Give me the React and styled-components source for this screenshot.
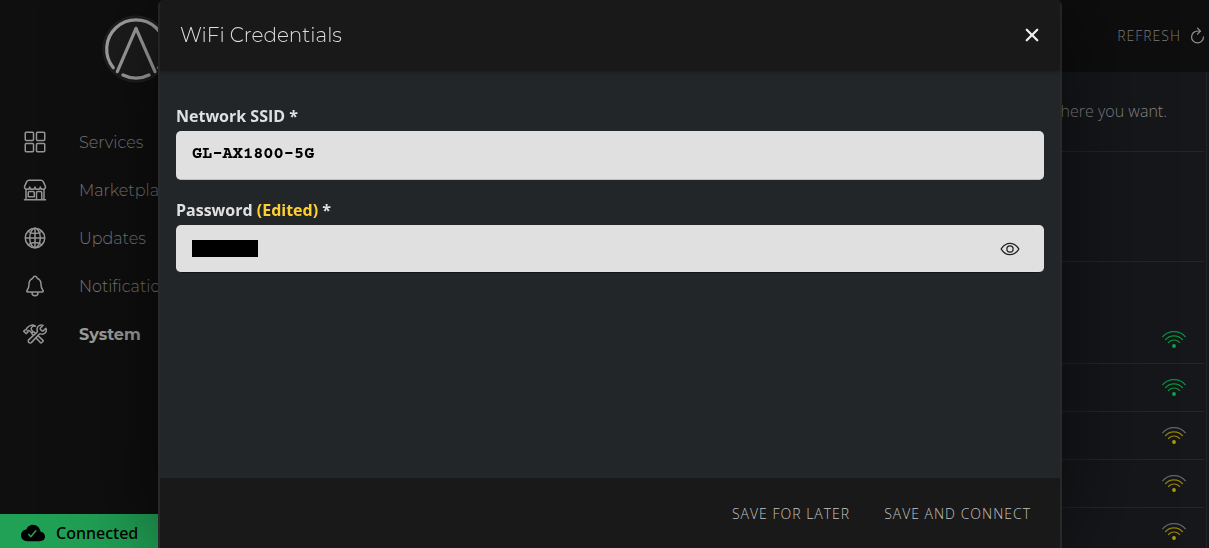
import React, { useState } from "react";
import styled, { createGlobalStyle } from "styled-components";
import {
  IoGridOutline,
  IoStorefrontOutline,
  IoGlobeOutline,
  IoNotificationsOutline,
  IoConstructOutline,
  IoCloudDone,
  IoRefreshOutline,
  IoClose,
  IoEyeOutline,
} from "react-icons/io5";

const GlobalStyle = createGlobalStyle`
  *, *::before, *::after { box-sizing: border-box; }
  body {
    margin: 0;
    overflow: hidden;
    background: #0f0f0f;
    font-family: "Open Sans", "Noto Sans", sans-serif;
  }
  button, input { font: inherit; border: 0; background: none; padding: 0; margin: 0; }
  button { cursor: pointer; }
`;

const heading = `Montserrat, "Open Sans", sans-serif`;

const Shell = styled.div`
  display: flex;
  height: 100vh;
  overflow: hidden;
`;

const Sidebar = styled.aside`
  display: flex;
  flex-direction: column;
  flex: 0 0 272px;
  background: #0f0f0f;
`;

const LogoArea = styled.div`
  display: flex;
  justify-content: center;
  padding: 15px 0 35px;
`;

const Nav = styled.nav`
  display: flex;
  flex-direction: column;
  flex: 1;
`;

const NavLink = styled.a`
  display: flex;
  align-items: center;
  gap: 32px;
  height: 48px;
  padding-left: 23px;
  color: ${(p) => (p.$active ? "#a0a0a0" : "#7c7c7c")};
  font-family: ${heading};
  font-size: 16px;
  font-weight: ${(p) => (p.$active ? 700 : 300)};
  text-decoration: none;

  svg { width: 24px; height: 24px; color: #959595; }
`;

const Status = styled.div`
  display: flex;
  align-items: center;
  gap: 11px;
  height: 34px;
  padding: 4px 0 0 21px;
  background: #20a155;
  color: #000;
  font-family: "Noto Sans", sans-serif;
  font-size: 16px;
  font-weight: 500;

  svg { width: 24px; height: 24px; }
`;

const Main = styled.main`
  flex: 1;
  min-width: 0;
  background: #15171a;
`;

const Toolbar = styled.header`
  display: flex;
  align-items: center;
  justify-content: flex-end;
  height: 72px;
  padding: 0 2px 2px 0;
  background: #0e0e0e;
`;

const RefreshButton = styled.button`
  display: flex;
  align-items: center;
  gap: 7px;
  color: #7c7c7c;
  font-size: 14px;
  font-weight: 300;
  letter-spacing: 1px;

  svg { width: 19px; height: 19px; color: #949494; }
`;

const Content = styled.div`
  margin-right: 2px;
  padding-right: 2px;
  border-right: 1px solid #222427;
`;

const Section = styled.section`
  display: flex;
  align-items: center;
  justify-content: flex-end;
  height: ${(p) => p.$height}px;
  padding: 0 37px 2px 0;
  border-bottom: 1px solid ${(p) => (p.$plain ? "transparent" : "#232528")};
  color: #858585;
  font-size: 16px;
  font-weight: 300;
`;

const NetworkRow = styled.div`
  display: flex;
  align-items: center;
  justify-content: flex-end;
  height: 48px;
  padding: 0 17px 2px 0;
  border-bottom: 1px solid #232528;
`;

const Overlay = styled.div`
  position: fixed;
  inset: 0;
  display: flex;
  padding: 0 147px 0 158px;
`;

const Dialog = styled.form`
  display: flex;
  flex-direction: column;
  flex: 1;
  min-width: 0;
  border: solid #29292c;
  border-width: 0 2px;
  border-radius: 6px 6px 0 0;
  background: #222629;
  box-shadow: 0 0 100px rgba(0, 0, 0, 0.6);
`;

const DialogHeader = styled.header`
  display: flex;
  align-items: center;
  justify-content: space-between;
  height: 71px;
  padding: 0 16px 2px 20px;
  border-radius: 4px 4px 0 0;
  background: #191919;
  box-shadow: 0 1px 4px rgba(0, 0, 0, 0.3);
`;

const Title = styled.h1`
  margin: 0;
  color: #dedede;
  font-family: ${heading};
  font-size: 20px;
  font-weight: 300;
`;

const CloseButton = styled.button`
  display: flex;
  color: #eee;

  svg { width: 24px; height: 24px; }
`;

const Fields = styled.div`
  display: flex;
  flex-direction: column;
  flex: 1;
  gap: 20px;
  padding: 35px 16px 0;
`;

const Field = styled.div`
  display: flex;
  flex-direction: column;
`;

const Label = styled.label`
  color: #e0e0e0;
  font-size: 16px;
  font-weight: 700;
  line-height: 20px;
  padding-bottom: 5px;
`;

const Edited = styled.span`
  color: #fed02f;
`;

const InputBox = styled.div`
  display: flex;
  align-items: center;
  height: ${(p) => (p.$shadowed ? 48 : 49)}px;
  padding: 0 24px 0 16px;
  border-radius: 5px;
  border-bottom: ${(p) => (p.$shadowed ? "1px solid #141414" : "1px solid #bcbec0")};
  background: #e0e0e0;
`;

const TextInput = styled.input`
  flex: 1;
  min-width: 0;
  height: 46px;
  padding-bottom: 2px;
  outline: 0;
  color: #000;
  font-family: "Courier Prime", "Liberation Mono", monospace;
  font-size: 17px;
  font-weight: 700;
`;

const Redaction = styled.span`
  width: 66px;
  height: 17px;
  background: #000;
`;

const EyeButton = styled.button`
  display: flex;
  color: #222;

  svg { width: 20px; height: 20px; }
`;

const DialogFooter = styled.footer`
  display: flex;
  align-items: center;
  justify-content: flex-end;
  gap: 34px;
  height: 70px;
  padding: 0 29px 0 0;
  background: #191919;
`;

const ActionButton = styled.button`
  color: #c2c2c2;
  font-size: 14px;
  font-weight: 300;
  letter-spacing: 1px;
`;

const Logo = () => (
  <svg width="68" height="68" viewBox="0 0 68 68" fill="none" stroke="#a5a5a5" strokeWidth="3.2" strokeLinecap="round" strokeLinejoin="round" role="img" aria-label="Logo">
    <circle cx="34" cy="34" r="33" fill="#1d1d1d" stroke="#242424" strokeWidth="1" />
    <path d="M11.3 52.7A29.3 29.3 0 1 1 56.7 52.7" />
    <path d="M21 60A29.3 29.3 0 0 0 47 60" />
    <path d="M15.3 56.7L34 13.3L53 56.7" />
  </svg>
);

const Signal = ({ strong }) => {
  const color = strong ? "#0b8f40" : "#988108";
  return (
    <svg width="26" height="20" viewBox="0 0 26 20" fill="none" stroke={color} strokeWidth="1.2" role="img" aria-label={strong ? "Strong signal" : "Medium signal"}>
      <path d="M1.3 8.2A15.2 15.2 0 0 1 24.7 8.2" stroke={strong ? color : "#66676a"} />
      <path d="M4.2 11A11.3 11.3 0 0 1 21.8 11" />
      <path d="M7 14A7.5 7.5 0 0 1 19 14" />
      <circle cx="13" cy="17" r="1.9" fill={strong ? "#0fa64b" : "#b39a0a"} stroke="none" />
    </svg>
  );
};

const navItems = [
  { label: "Services", Icon: IoGridOutline },
  { label: "Marketplace", Icon: IoStorefrontOutline },
  { label: "Updates", Icon: IoGlobeOutline },
  { label: "Notifications", Icon: IoNotificationsOutline },
  { label: "System", Icon: IoConstructOutline, active: true },
];

const networks = [true, true, false, false, false];

export default function App() {
  const [ssid, setSsid] = useState("GL-AX1800-5G");
  const [password, setPassword] = useState("");
  const [visible, setVisible] = useState(false);

  return (
    <>
      <GlobalStyle />
      <Shell>
        <Sidebar>
          <LogoArea><Logo /></LogoArea>
          <Nav>
            {navItems.map(({ label, Icon, active }) => (
              <NavLink key={label} href="#" $active={active}>
                <Icon />
                {label}
              </NavLink>
            ))}
          </Nav>
          <Status><IoCloudDone />Connected</Status>
        </Sidebar>
        <Main>
          <Toolbar>
            <RefreshButton type="button">REFRESH<IoRefreshOutline /></RefreshButton>
          </Toolbar>
          <Content>
            <Section $height={80}>where you want.</Section>
            <Section $height={110} />
            <Section $height={54} $plain />
            {networks.map((strong, i) => (
              <NetworkRow key={i}><Signal strong={strong} /></NetworkRow>
            ))}
          </Content>
        </Main>
      </Shell>
      <Overlay>
        <Dialog role="dialog" aria-labelledby="title" onSubmit={(e) => e.preventDefault()}>
          <DialogHeader>
            <Title id="title">WiFi Credentials</Title>
            <CloseButton type="button" aria-label="Close"><IoClose /></CloseButton>
          </DialogHeader>
          <Fields>
            <Field>
              <Label htmlFor="ssid">Network SSID *</Label>
              <InputBox>
                <TextInput id="ssid" value={ssid} onChange={(e) => setSsid(e.target.value)} />
              </InputBox>
            </Field>
            <Field>
              <Label htmlFor="password">Password <Edited>(Edited)</Edited> *</Label>
              <InputBox $shadowed>
                <Redaction />
                <TextInput
                  id="password"
                  type={visible ? "text" : "password"}
                  value={password}
                  onChange={(e) => setPassword(e.target.value)}
                />
                <EyeButton type="button" aria-label="Show password" onClick={() => setVisible(!visible)}>
                  <IoEyeOutline />
                </EyeButton>
              </InputBox>
            </Field>
          </Fields>
          <DialogFooter>
            <ActionButton type="button">SAVE FOR LATER</ActionButton>
            <ActionButton type="submit">SAVE AND CONNECT</ActionButton>
          </DialogFooter>
        </Dialog>
      </Overlay>
    </>
  );
}
